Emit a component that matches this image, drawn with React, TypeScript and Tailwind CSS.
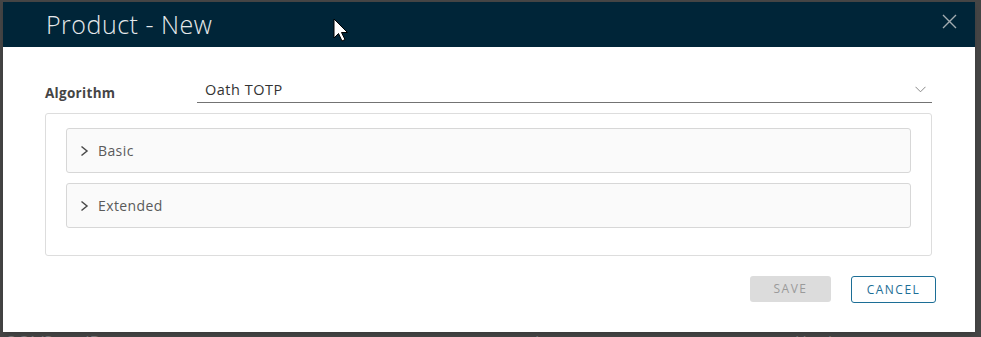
import { ChevronDown } from "lucide-react";

const font = { fontFamily: '"Open Sans", "Liberation Sans", sans-serif' };

function Panel({ label }: { label: string }) {
  return (
    <div className="flex h-[45px] items-center rounded-[3px] border border-[#d7d7d7] bg-[#fafafa] pl-[13px]">
      <svg width="9" height="12" viewBox="0 0 9 12" className="text-[#4a4a4a]">
        <path d="M1.5 1.5 L7 6 L1.5 10.5" fill="none" stroke="currentColor" strokeWidth="1.5" />
      </svg>
      <span className="ml-[9px] text-[14px] tracking-[0.4px] text-[#5a5a5a]">{label}</span>
    </div>
  );
}

export default function App() {
  return (
    <div
      className="relative h-[337px] w-[981px] overflow-hidden bg-[#454545]"
      style={font}
    >
      {/* faint page behind the overlay */}
      <div className="absolute left-[5px] top-[330px] flex w-full text-[16px] text-[#777]">
        <span className="w-[530px]">OCA/SecurID</span>
        <span className="w-[260px]">Legacy</span>
        <span>Hardware</span>
      </div>

      <div className="absolute left-[3px] top-[2px] flex h-[330px] w-[972px] flex-col bg-white shadow-md">
        <div className="flex h-[45px] shrink-0 items-center justify-between bg-[#002538] pl-[43px] pr-[18px]">
          <h1 className="text-[25px] font-light tracking-[0.5px] text-[#e6e9eb]">Product - New</h1>
          <svg width="15" height="15" viewBox="0 0 15 15" className="mt-[-6px] text-[#a3acb1]">
            <path d="M1 1 L14 14 M14 1 L1 14" stroke="currentColor" strokeWidth="1.4" />
          </svg>
        </div>

        <div className="flex flex-col px-[42px] pt-[30px]">
          <div className="flex items-end">
            <div className="w-[152px] pb-[0px] text-[13.5px] font-bold tracking-[0.3px] text-[#454545]">Algorithm</div>
            <div className="flex h-[26px] w-[735px] items-center justify-between border-b border-[#737373] pl-[8px] pr-[4px]">
              <span className="text-[14.5px] tracking-[0.5px] text-[#333]">Oath TOTP</span>
              <svg width="11" height="7" viewBox="0 0 11 7" className="mr-[2px] text-[#888]">
                <path d="M0.5 0.8 L5.5 5.8 L10.5 0.8" fill="none" stroke="currentColor" strokeWidth="1" />
              </svg>
            </div>
          </div>

          <div className="mt-[10px] flex w-[887px] flex-col gap-[10px] rounded-[3px] border border-[#dddddd] px-[20px] pb-[27px] pt-[14px]">
            <Panel label="Basic" />
            <Panel label="Extended" />
          </div>

          <div className="mt-[20px] mr-[-3px] flex justify-end gap-[20px]">
            <button className="h-[26px] w-[81px] rounded-[3px] bg-[#dcdcdc] text-[12px] tracking-[1.5px] text-[#9a9a9a]">
              SAVE
            </button>
            <button className="h-[27px] w-[85px] rounded-[3px] border border-[#1c6e96] text-[12px] tracking-[1.5px] text-[#1c6e96]">
              CANCEL
            </button>
          </div>
        </div>
      </div>

      {/* mouse pointer */}
      <svg className="absolute left-[333px] top-[18px]" width="18" height="26" viewBox="0 0 18 26">
        <path d="M1 1 L1 20 L5.5 15.5 L9 23 L12 21.5 L8.5 14.5 L14.5 14.5 Z" fill="#fff" stroke="#000" strokeWidth="1" />
      </svg>
    </div>
  );
}
